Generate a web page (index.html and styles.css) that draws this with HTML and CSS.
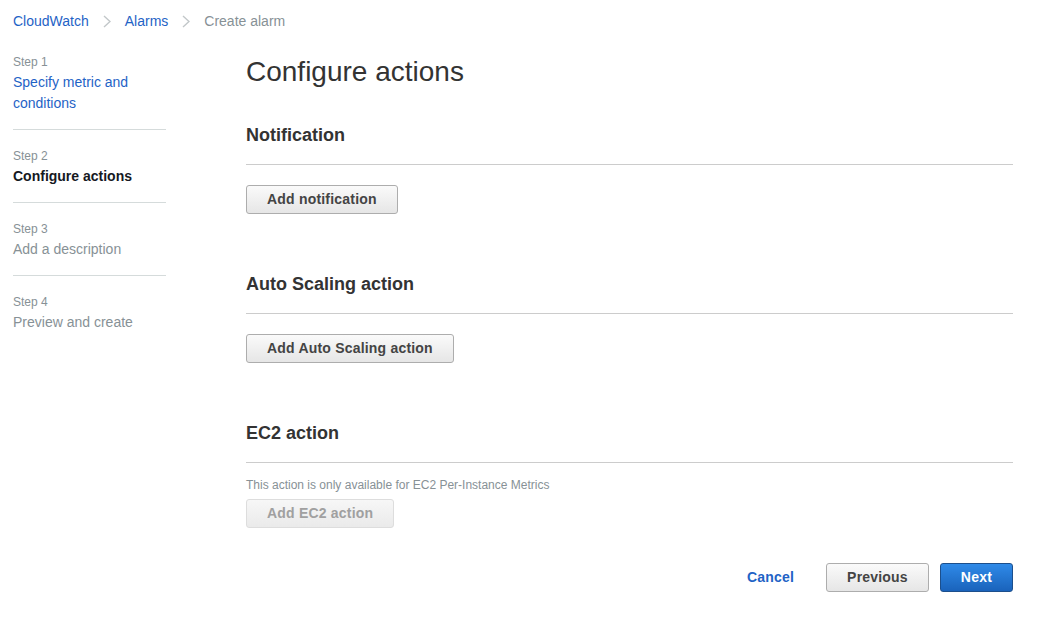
FILE: index.html
```html
<!DOCTYPE html>
<html lang="en">
<head>
<meta charset="utf-8">
<title>Create alarm - CloudWatch</title>
<link rel="stylesheet" href="styles.css">
</head>
<body>
<nav class="breadcrumb">
  <a class="crumb-link" href="#">CloudWatch</a>
  <svg class="chev" width="8" height="13" viewBox="0 0 8 13"><polyline points="1,1 7,6.5 1,12" fill="none" stroke="#c2c7c9" stroke-width="1.4"/></svg>
  <a class="crumb-link" href="#">Alarms</a>
  <svg class="chev" width="8" height="13" viewBox="0 0 8 13"><polyline points="1,1 7,6.5 1,12" fill="none" stroke="#c2c7c9" stroke-width="1.4"/></svg>
  <span class="crumb-current">Create alarm</span>
</nav>
<div class="page">
  <aside class="steps">
    <div class="step">
      <div class="step-label">Step 1</div>
      <a class="step-title link" href="#">Specify metric and conditions</a>
    </div>
    <div class="step">
      <div class="step-label">Step 2</div>
      <div class="step-title current">Configure actions</div>
    </div>
    <div class="step">
      <div class="step-label">Step 3</div>
      <div class="step-title disabled">Add a description</div>
    </div>
    <div class="step last">
      <div class="step-label">Step 4</div>
      <div class="step-title disabled">Preview and create</div>
    </div>
  </aside>
  <main class="main">
    <h1 class="page-title">Configure actions</h1>
    <section class="section">
      <h2 class="section-title">Notification</h2>
      <div class="section-body">
        <button class="btn">Add notification</button>
      </div>
    </section>
    <section class="section">
      <h2 class="section-title">Auto Scaling action</h2>
      <div class="section-body">
        <button class="btn">Add Auto Scaling action</button>
      </div>
    </section>
    <section class="section ec2">
      <h2 class="section-title">EC2 action</h2>
      <div class="section-body">
        <p class="note">This action is only available for EC2 Per-Instance Metrics</p>
        <button class="btn" disabled>Add EC2 action</button>
      </div>
    </section>
    <div class="footer">
      <button class="btn-link">Cancel</button>
      <button class="btn">Previous</button>
      <button class="btn btn-primary">Next</button>
    </div>
  </main>
</div>
</body>
</html>
```
FILE: styles.css
```css
* { box-sizing: border-box; }

body {
  margin: 0;
  background: #ffffff;
  font-family: "Liberation Sans", Arial, sans-serif;
  font-size: 14px;
  color: #16191f;
}

.breadcrumb {
  display: flex;
  align-items: center;
  gap: 14px;
  padding: 10px 13px 0;
  height: 32px;
  line-height: 22px;
  font-size: 14px;
}

.crumb-link {
  color: #1f63c6;
  text-decoration: none;
}

.chev { display: block; }

.crumb-current { color: #879196; }

.page {
  display: flex;
  padding: 22px 32px 0 13px;
}

.steps {
  width: 153px;
  flex: none;
}

.step {
  padding: 18px 0 15px;
  border-bottom: 1px solid #d5dbdb;
}

.step:first-child { padding-top: 0; }

.step.last { border-bottom: none; }

.step-label {
  font-size: 12px;
  line-height: 16px;
  color: #879196;
  margin-bottom: 2px;
}

.step-title {
  display: block;
  font-size: 14px;
  line-height: 21px;
}

.step-title.link {
  color: #1f63c6;
  text-decoration: none;
}

.step-title.current {
  font-weight: bold;
  color: #16191f;
}

.step-title.disabled { color: #879196; }

.main {
  flex: 1;
  margin-left: 80px;
}

.page-title {
  margin: 1px 0 0;
  font-size: 28px;
  line-height: 1.2;
  font-weight: normal;
  color: #333333;
}

.section { margin-top: 35px; }

.section + .section { margin-top: 59px; }

.section-title {
  margin: 0;
  padding-bottom: 18px;
  border-bottom: 1px solid #cccccc;
  font-size: 18px;
  line-height: 22px;
  font-weight: bold;
  color: #333333;
}

.section-body { padding-top: 20px; }

.ec2 .section-body { padding-top: 14px; }

.note {
  margin: 0 0 6px;
  font-size: 12px;
  line-height: 16px;
  color: #879196;
}

.btn {
  display: inline-block;
  height: 29px;
  padding: 0 20px;
  border: 1px solid #adadad;
  border-radius: 3px;
  background: linear-gradient(#fafafa, #e6e6e6);
  font-family: "Liberation Sans", Arial, sans-serif;
  font-size: 14px;
  font-weight: bold;
  letter-spacing: 0.2px;
  color: #444444;
  cursor: pointer;
}

.btn:disabled {
  border-color: #dddddd;
  background: linear-gradient(#f7f7f7, #eaeaea);
  color: #a0a0a0;
  cursor: default;
}

.btn-primary {
  border-color: #1c4f8c;
  background: linear-gradient(#2f8ae8, #1a63bb);
  color: #ffffff;
}

.btn-link {
  height: 29px;
  padding: 0 20px;
  border: 1px solid transparent;
  background: none;
  font-family: "Liberation Sans", Arial, sans-serif;
  font-size: 14px;
  font-weight: bold;
  letter-spacing: 0.2px;
  color: #1f63c6;
  cursor: pointer;
}

.footer {
  display: flex;
  justify-content: flex-end;
  gap: 11px;
  margin-top: 35px;
}
```
